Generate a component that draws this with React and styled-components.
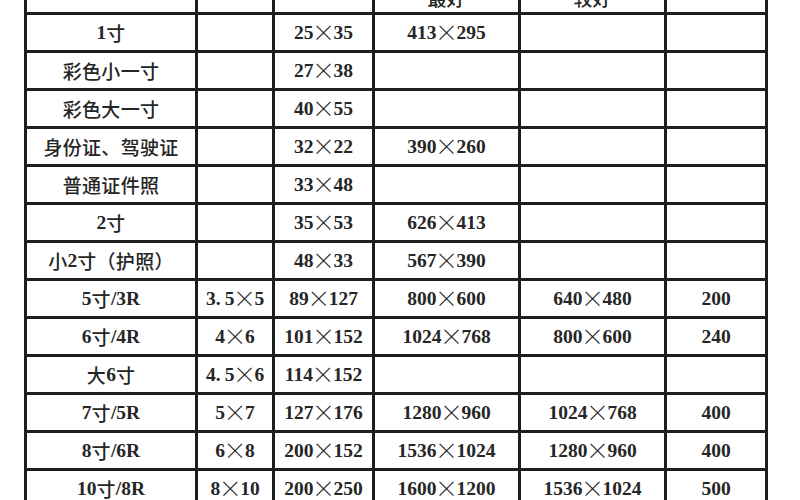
import React from "react";
import styled, { createGlobalStyle } from "styled-components";

const GlobalStyle = createGlobalStyle`
  html, body {
    margin: 0;
    padding: 0;
    background: #ffffff;
  }
`;

const Page = styled.div`
  width: 800px;
  height: 500px;
  overflow: hidden;
  background: #ffffff;
`;

const Grid = styled.div`
  display: grid;
  grid-template-columns: 168px 74px 97px 143px 143px 98px;
  grid-auto-rows: 35px;
  gap: 3px;
  padding: 3px;
  width: max-content;
  margin: -26px 0 0 24px;
  background: #1e1e1e;
`;

const Cell = styled.div`
  display: flex;
  align-items: center;
  justify-content: center;
  background: #ffffff;
  color: #262626;
  font-family: "Liberation Serif", "Noto Sans CJK SC", serif;
  font-weight: 700;
  font-size: 19.5px;
  white-space: nowrap;
  overflow: hidden;
`;

const HeadText = styled.span`
  font-family: "Noto Sans CJK SC", sans-serif;
  font-weight: 500;
  font-size: 19px;
  transform: translateY(3px);
`;

const Han = styled.span`
  font-family: "Noto Sans CJK SC", sans-serif;
  font-weight: 500;
  font-size: 19px;
  letter-spacing: 0.3px;
`;

const Mul = styled.span`
  display: inline-flex;
  justify-content: center;
  width: 20px;
  font-family: "Noto Sans CJK SC", sans-serif;
  font-weight: 300;
  font-size: 23px;
  line-height: 1;
  transform: translateY(-1px);
`;

const Dot = styled.span`
  display: inline-block;
  width: 9px;
  text-align: left;
`;

const header = ["", "", "", "最好", "较好", ""];

const rows = [
  ["1寸", "", "25×35", "413×295", "", ""],
  ["彩色小一寸", "", "27×38", "", "", ""],
  ["彩色大一寸", "", "40×55", "", "", ""],
  ["身份证、驾驶证", "", "32×22", "390×260", "", ""],
  ["普通证件照", "", "33×48", "", "", ""],
  ["2寸", "", "35×53", "626×413", "", ""],
  ["小2寸（护照）", "", "48×33", "567×390", "", ""],
  ["5寸/3R", "3.5×5", "89×127", "800×600", "640×480", "200"],
  ["6寸/4R", "4×6", "101×152", "1024×768", "800×600", "240"],
  ["大6寸", "4.5×6", "114×152", "", "", ""],
  ["7寸/5R", "5×7", "127×176", "1280×960", "1024×768", "400"],
  ["8寸/6R", "6×8", "200×152", "1536×1024", "1280×960", "400"],
  ["10寸/8R", "8×10", "200×250", "1600×1200", "1536×1024", "500"],
];

// digits and latin stay in the serif face, CJK glyphs and × use the CJK face
function renderText(text) {
  const parts = text.split(/([×.]|[\u3000-\u9fff\uff08\uff09]+)/).filter(Boolean);
  return parts.map((p, i) => {
    if (p === "×") return <Mul key={i}>{p}</Mul>;
    if (p === ".") return <Dot key={i}>{p}</Dot>;
    if (/[\u3000-\u9fff\uff08\uff09]/.test(p)) return <Han key={i}>{p}</Han>;
    return <React.Fragment key={i}>{p}</React.Fragment>;
  });
}

export default function App() {
  return (
    <Page>
      <GlobalStyle />
      <Grid>
        {header.map((h, i) => (
          <Cell key={`h${i}`}>
            <HeadText>{h}</HeadText>
          </Cell>
        ))}
        {rows.map((row, r) =>
          row.map((c, i) => <Cell key={`${r}-${i}`}>{renderText(c)}</Cell>)
        )}
      </Grid>
    </Page>
  );
}
